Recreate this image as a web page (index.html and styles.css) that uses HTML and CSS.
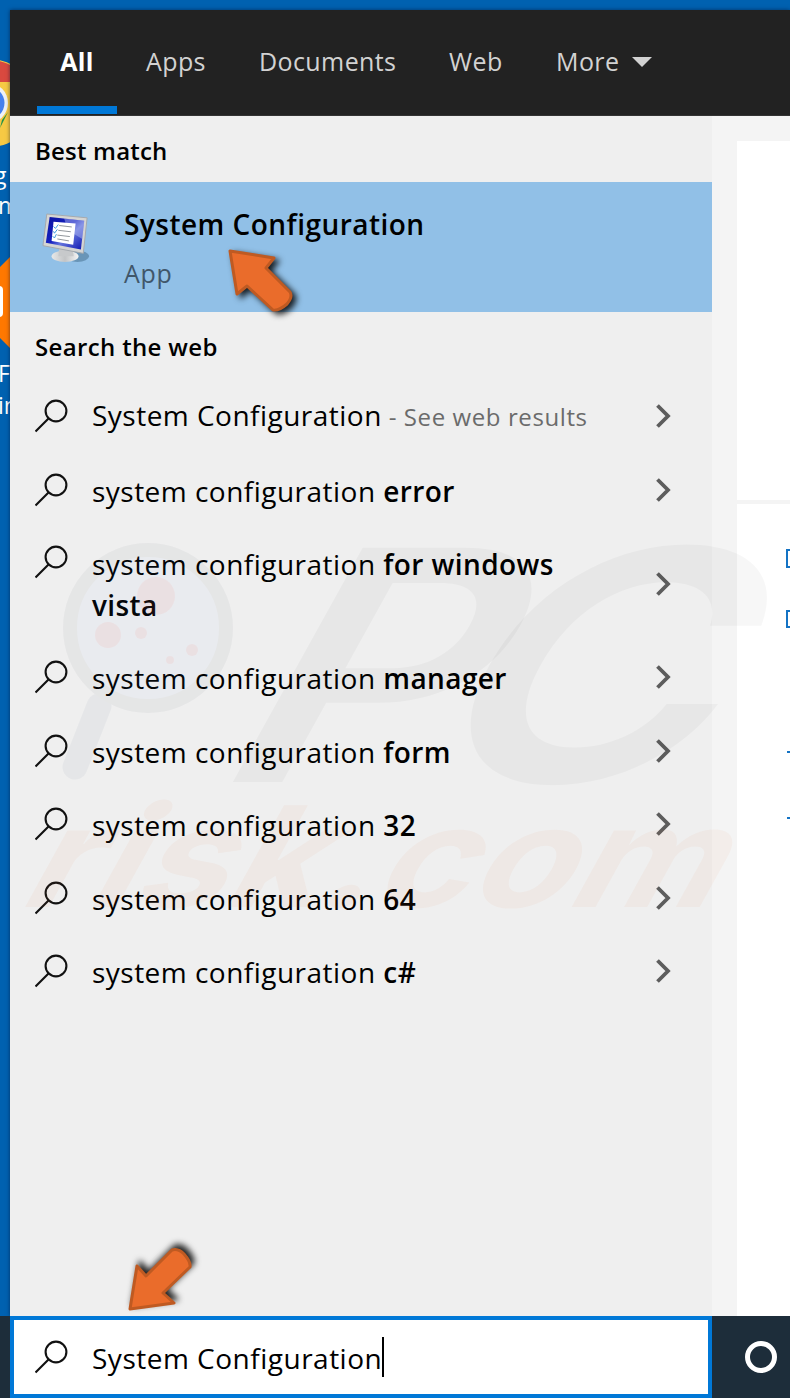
FILE: index.html
```html
<!DOCTYPE html>
<html lang="en">
<head>
    <meta charset="UTF-8">
    <meta name="viewport" content="width=device-width, initial-scale=1.0">
    <title>Search</title>
    <link rel="stylesheet" href="styles.css">
</head>
<body>
    <svg class="symbols" width="0" height="0">
        <symbol id="search" viewBox="0 0 34 34">
            <circle cx="21" cy="12" r="10.4"/>
            <path d="M13.500 19.500 .5 32.500"/>
        </symbol>
        <symbol id="chevron" viewBox="0 0 15 24">
            <path d="M1.500 1.500 12 12 1.500 22.500"/>
        </symbol>
    </svg>

    <div class="desktop">
        <!-- desktop shortcuts cut off by the search window -->
        <svg class="shortcuts" width="10" height="1316" viewBox="0 0 10 1316">
            <circle cx="-10" cy="103" r="44" fill="#f6c944"/>
            <path d="M-54 103A44 44 0 0 1 28 82L-10 82Z" fill="#d9493f"/>
            <path d="M0 128 8 112 2 120Z" fill="#23934a"/>
            <circle cx="-12" cy="103" r="20" fill="#eef1f5"/>
            <circle cx="-12" cy="103" r="16.5" fill="#4580ee"/>
            <path d="M10 257 0 267V338L10 348Z" fill="#ff7800"/>
            <rect x="-20" y="286" width="23" height="31" rx="4" fill="#fff"/>
            <text x="-6" y="184">g</text>
            <text x="-2" y="214">m</text>
            <text x="-2" y="382">F</text>
            <text x="-2" y="414">in</text>
        </svg>

        <div class="window">
            <div class="tabs">
                <div class="tab active">All</div>
                <div class="tab apps">Apps</div>
                <div class="tab documents">Documents</div>
                <div class="tab web">Web</div>
                <div class="tab more">More <span class="caret"></span></div>
            </div>

            <div class="content">
                <div class="results">
                    <h2 class="heading">Best match</h2>
                    <div class="best">
                        <svg class="app-icon" width="48" height="52" viewBox="0 0 50 54">
                            <defs>
                                <linearGradient id="screen" x1="0" y1="0" x2="1" y2="1">
                                    <stop offset="0" stop-color="#0a12a0"/>
                                    <stop offset=".45" stop-color="#1621c0"/>
                                    <stop offset=".6" stop-color="#6474dc"/>
                                    <stop offset="1" stop-color="#0a12b0"/>
                                </linearGradient>
                                <linearGradient id="stand" x1="0" y1="0" x2="1" y2="0">
                                    <stop offset="0" stop-color="#e8e8e8"/>
                                    <stop offset=".5" stop-color="#c2c4c6"/>
                                    <stop offset="1" stop-color="#f4f4f4"/>
                                </linearGradient>
                            </defs>
                            <ellipse cx="37" cy="46" rx="12" ry="6" fill="#4e7898" opacity=".6"/>
                            <ellipse cx="24" cy="46" rx="14" ry="6" fill="url(#stand)"/>
                            <path d="M18 37H32L33 46H17Z" fill="#c7c9cb"/>
                            <path d="M5 2 47 6 43 43 1 35Z" fill="#d5d5d3" stroke="#a3a8ad"/>
                            <path d="M8 5 44 9 40.500 39 4 32Z" fill="url(#screen)"/>
                            <path d="M23 6.500 44 9 42 28 27 19Z" fill="#b9c2f5" opacity=".45"/>
                            <path d="M12 10 35 12 32.500 34 10 30Z" fill="#fff"/>
                            <path d="M18 14 31 15.500M17 19 30 20.500M16 24 29 25.500M16 28 28 30" stroke="#8d9298"/>
                            <path d="M12 15 14 17 17 13M12 20 13 22 16 18M11 25 13 27 15 23" fill="none" stroke="#3998dc"/>
                        </svg>
                        <div class="best-text">
                            <div class="best-name">System Configuration</div>
                            <div class="best-type">App</div>
                        </div>
                    </div>

                    <h2 class="heading web-heading">Search the web</h2>
                    <div class="row first">
                        <svg class="search-icon"><use href="#search"/></svg>
                        <div class="label">System Configuration<span class="hint"> - See web results</span></div>
                        <svg class="chevron"><use href="#chevron"/></svg>
                    </div>
                    <div class="row">
                        <svg class="search-icon"><use href="#search"/></svg>
                        <div class="label">system configuration <b>error</b></div>
                        <svg class="chevron"><use href="#chevron"/></svg>
                    </div>
                    <div class="row tall">
                        <svg class="search-icon"><use href="#search"/></svg>
                        <div class="label">system configuration <b>for windows<br>vista</b></div>
                        <svg class="chevron"><use href="#chevron"/></svg>
                    </div>
                    <div class="row">
                        <svg class="search-icon"><use href="#search"/></svg>
                        <div class="label">system configuration <b>manager</b></div>
                        <svg class="chevron"><use href="#chevron"/></svg>
                    </div>
                    <div class="row">
                        <svg class="search-icon"><use href="#search"/></svg>
                        <div class="label">system configuration <b>form</b></div>
                        <svg class="chevron"><use href="#chevron"/></svg>
                    </div>
                    <div class="row">
                        <svg class="search-icon"><use href="#search"/></svg>
                        <div class="label">system configuration <b>32</b></div>
                        <svg class="chevron"><use href="#chevron"/></svg>
                    </div>
                    <div class="row">
                        <svg class="search-icon"><use href="#search"/></svg>
                        <div class="label">system configuration <b>64</b></div>
                        <svg class="chevron"><use href="#chevron"/></svg>
                    </div>
                    <div class="row">
                        <svg class="search-icon"><use href="#search"/></svg>
                        <div class="label">system configuration <b>c#</b></div>
                        <svg class="chevron"><use href="#chevron"/></svg>
                    </div>
                </div>

                <div class="preview">
                    <div class="preview-card"></div>
                    <div class="preview-card actions">
                        <svg width="4" height="280" viewBox="0 0 4 280" fill="none" stroke="#1473c4" stroke-width="2">
                            <path d="M5 1H1V18H5M5 62H1V78H5M1 203H4M1 269H4"/>
                        </svg>
                    </div>
                </div>
            </div>
        </div>

        <div class="taskbar">
            <div class="search-box">
                <svg class="search-icon"><use href="#search"/></svg>
                <span class="query">System Configuration</span>
                <span class="cursor"></span>
            </div>
            <div class="cortana"></div>
        </div>

        <svg class="watermark" width="790" height="400" viewBox="0 520 790 400">
            <g opacity=".04">
                <path d="M99 706 75 767" stroke="#12315a" stroke-width="25" stroke-linecap="round"/>
                <circle cx="148" cy="628" r="78" fill="#6fa5ff" stroke="#12202e" stroke-width="14"/>
            </g>
            <g fill="#ff5a4a" opacity=".07">
                <circle cx="156" cy="596" r="19"/>
                <circle cx="108" cy="635" r="13"/>
                <circle cx="141" cy="633" r="6"/>
                <circle cx="192" cy="650" r="6"/>
                <circle cx="170" cy="660" r="4"/>
            </g>
            <text class="mark-pc" transform="translate(205 782) skewX(-29)" textLength="245" lengthAdjust="spacingAndGlyphs">P</text>
            <text class="mark-pc" transform="translate(405 782) skewX(-29)" textLength="288" lengthAdjust="spacingAndGlyphs">C</text>
            <text class="mark-risk" transform="translate(15 907) skewX(-29)" textLength="695" lengthAdjust="spacingAndGlyphs">risk.com</text>
        </svg>

        <svg class="arrow arrow-top" width="90" height="90" viewBox="0 0 90 90">
            <path d="M9 11 53 18 45 28 69 52Q72 57 66 64Q58 71 52 70L26 46 16 54Z"/>
        </svg>
        <svg class="arrow arrow-bottom" width="90" height="90" viewBox="0 0 90 90">
            <path d="M10 71 17 28 26 38 52 12Q58 10 64 16Q71 24 70 29L43 55 54 65Z"/>
        </svg>
    </div>
</body>
</html>
```

FILE: styles.css
```css
body {
    margin: 0;
    overflow: hidden;
    font-family: "Open Sans", "Noto Sans", sans-serif;
    color: #000;
}
.symbols {
    position: absolute;
}
.desktop {
    position: relative;
    width: 790px;
    height: 1398px;
    display: grid;
    grid-template-columns: 10px 780px;
    grid-template-rows: 1316px 82px;
    background: #0061b0;
    overflow: hidden;
}
.shortcuts {
    overflow: hidden;
}
.shortcuts text {
    font-size: 23px;
    fill: #fff;
}
.window {
    margin-top: 10px;
    display: flex;
    flex-direction: column;
    box-shadow: 0 0 4px rgba(0, 20, 50, 0.6);
}
.tabs {
    height: 106px;
    box-sizing: border-box;
    background: #222;
    color: #d2d2d2;
    border-bottom: 1px solid #333;
    display: flex;
    padding-left: 27px;
    font-size: 25px;
    line-height: 103px;
    letter-spacing: 0.4px;
    white-space: nowrap;
}
.tab {
    box-sizing: border-box;
}
.active {
    width: 80px;
    height: 104px;
    text-align: center;
    color: #fff;
    font-weight: 700;
    border-bottom: 8px solid #0078d7;
}
.apps {
    width: 114px;
    padding-left: 29px;
}
.documents {
    width: 189px;
    padding-left: 28px;
}
.web {
    width: 108px;
    padding-left: 29px;
}
.more {
    height: 103px;
    padding-left: 28px;
    display: flex;
    align-items: center;
    gap: 13px;
}
.caret {
    border: 10px solid transparent;
    border-top-color: #d2d2d2;
    border-bottom: 0;
}
.content {
    flex: 1;
    display: flex;
}
.results {
    width: 702px;
    background: #efefef;
}
.heading {
    margin: 0;
    height: 66px;
    line-height: 70px;
    padding-left: 25px;
    font-size: 24px;
    font-weight: 600;
    letter-spacing: 0.2px;
}
.web-heading {
    letter-spacing: 0.35px;
}
.best {
    height: 130px;
    background: #91c0e7;
    display: flex;
}
.app-icon {
    margin: 30px 0 0 32px;
}
.best-text {
    padding: 21px 0 0 34px;
}
.best-name {
    font-size: 28px;
    line-height: 42px;
    font-weight: 600;
    letter-spacing: 0.47px;
}
.best-type {
    margin-top: 10px;
    font-size: 25px;
    line-height: 36px;
    letter-spacing: 0.7px;
    color: #40566a;
}
.row {
    height: 73.5px;
    display: flex;
    align-items: center;
    padding: 0 41px 0 25px;
}
.first {
    height: 75px;
}
.tall {
    height: 114px;
}
.search-icon {
    width: 34px;
    height: 34px;
    fill: none;
    stroke: #111;
    stroke-width: 2.1;
}
.tall .search-icon {
    align-self: flex-start;
    margin-top: 18px;
}
.label {
    flex: 1;
    padding: 3px 0 0 23px;
    font-size: 28px;
    line-height: 41px;
    letter-spacing: 0.48px;
    white-space: nowrap;
}
.first .label {
    padding-top: 1px;
}
.label b {
    font-weight: 600;
    letter-spacing: 0.4px;
}
.hint {
    font-size: 24px;
    letter-spacing: 0.6px;
    color: #6b6b6b;
    white-space: pre;
}
.chevron {
    width: 15px;
    height: 24px;
    fill: none;
    stroke: #5d5d5d;
    stroke-width: 3.8;
}
.preview {
    flex: 1;
    background: #f4f4f4;
    padding: 25px 0 0 25px;
    display: flex;
    flex-direction: column;
    gap: 4px;
}
.preview-card {
    height: 359px;
    background: #fff;
}
.actions {
    flex: 1;
    padding: 45px 0 0 49px;
}
.taskbar {
    grid-column: 1 / 3;
    padding-left: 10px;
    background: #1d2d3a;
    display: flex;
}
.search-box {
    box-sizing: border-box;
    width: 702px;
    background: #fff;
    border: 4px solid #0078d7;
    padding-left: 21px;
    display: flex;
    align-items: center;
}
.query {
    padding: 2px 0 0 23px;
    font-size: 28px;
    letter-spacing: 0.5px;
}
.cursor {
    width: 2px;
    height: 40px;
    background: #000;
}
.cortana {
    box-sizing: border-box;
    width: 32px;
    height: 32px;
    margin: 25px 0 0 33px;
    border: 5px solid #fff;
    border-radius: 50%;
}
.watermark {
    position: absolute;
    left: 0;
    top: 520px;
}
.mark-pc {
    font-family: Inter, sans-serif;
    font-size: 322px;
    font-weight: 600;
    fill: rgba(0, 0, 0, 0.032);
}
.mark-risk {
    font-family: Inter, sans-serif;
    font-size: 140px;
    font-weight: 700;
    fill: rgba(240, 120, 50, 0.05);
}
.arrow {
    position: absolute;
    fill: #ea6c2b;
    stroke: #bf5a22;
    stroke-width: 3;
    stroke-linejoin: round;
    filter: drop-shadow(4px 3px 3px rgba(0, 0, 0, 0.85));
}
.arrow-top {
    left: 221px;
    top: 240px;
}
.arrow-bottom {
    left: 120px;
    top: 1238px;
    filter: drop-shadow(3px -4px 3px rgba(0, 0, 0, 0.85));
}
```
